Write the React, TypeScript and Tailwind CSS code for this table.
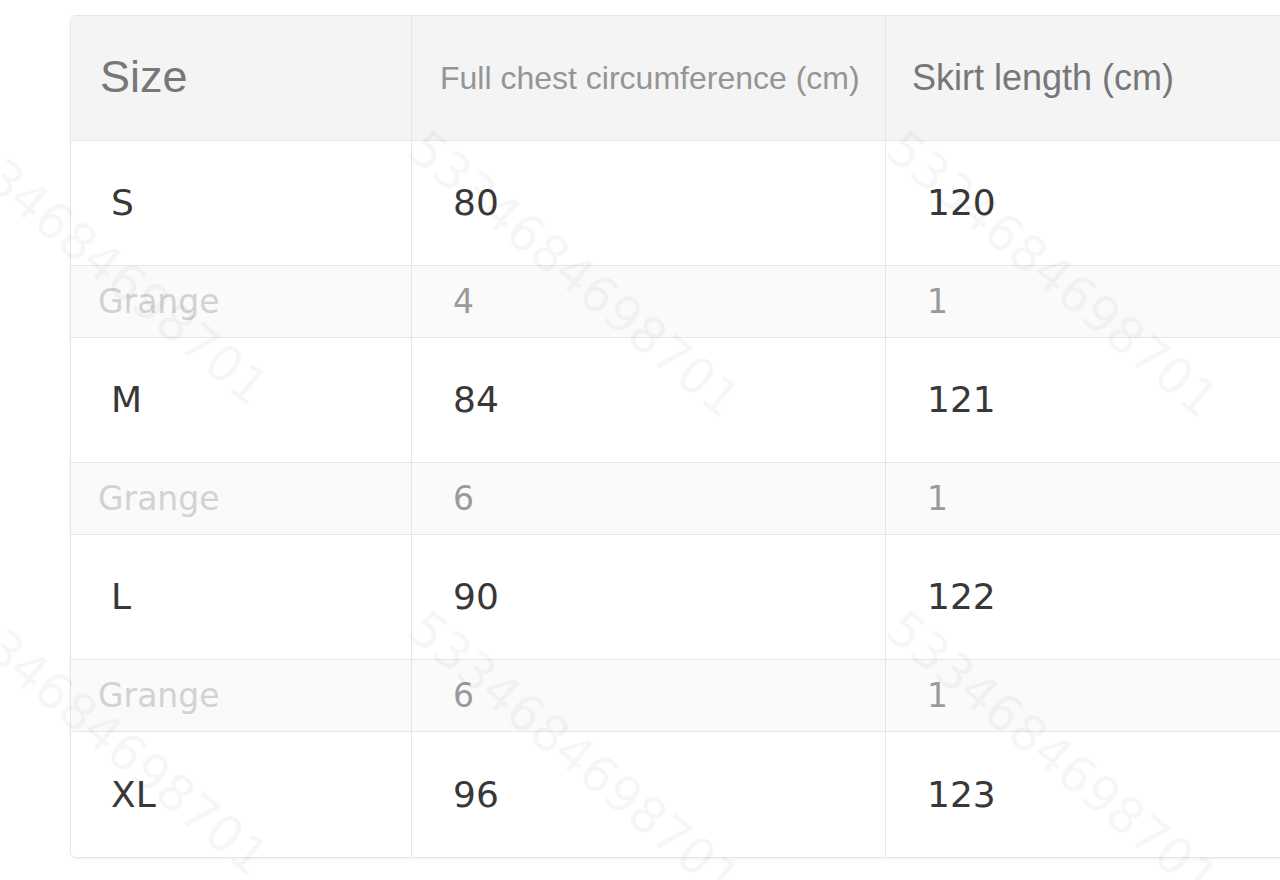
import React from 'react';

interface SizeRow {
  size: string;
  chest: string;
  skirt: string;
  grange?: { chest: string; skirt: string };
}

const rows: SizeRow[] = [
  { size: 'S', chest: '80', skirt: '120', grange: { chest: '4', skirt: '1' } },
  { size: 'M', chest: '84', skirt: '121', grange: { chest: '6', skirt: '1' } },
  { size: 'L', chest: '90', skirt: '122', grange: { chest: '6', skirt: '1' } },
  { size: 'XL', chest: '96', skirt: '123' },
];

// faint diagonal seller-id watermark, drawn over the table
const marks = [
  { left: -40, top: 110 },
  { left: 432, top: 122 },
  { left: 910, top: 122 },
  { left: -40, top: 580 },
  { left: 432, top: 602 },
  { left: 910, top: 602 },
];

export default function App() {
  return (
    <div className="relative w-[1280px] h-[880px] overflow-hidden bg-white">
      <div className="ml-[70px] mt-[15px] w-[1290px] rounded-md border border-[#e6e6e6] shadow-[0_1px_3px_rgba(0,0,0,0.06)] overflow-hidden">
        {/* header */}
        <div className="flex h-[125px] bg-[#f4f4f4] border-b border-[#e6e6e6] font-['Liberation_Sans',Arial,sans-serif]">
          <div className="w-[341px] flex items-center pl-[29px] pb-[2px] text-[45px] text-[#777] border-r border-[#e6e6e6]">
            Size
          </div>
          <div className="w-[474px] flex items-center pl-[28px] text-[32px] text-[#959595] border-r border-[#e6e6e6]">
            Full chest circumference (cm)
          </div>
          <div className="flex-1 flex items-center pl-[26px] text-[36px] text-[#777]">
            Skirt length (cm)
          </div>
        </div>

        {rows.map((r, i) => (
          <React.Fragment key={r.size}>
            <div className={`flex h-[125px] font-['DejaVu_Sans',sans-serif] text-[36px] text-[#383838] ${i < rows.length - 1 ? 'border-b border-[#e6e6e6]' : ''}`}>
              <div className="w-[341px] flex items-center pl-[40px] border-r border-[#e6e6e6]">{r.size}</div>
              <div className="w-[474px] flex items-center pl-[41px] border-r border-[#e6e6e6]">{r.chest}</div>
              <div className="flex-1 flex items-center pl-[41px]">{r.skirt}</div>
            </div>
            {r.grange && (
              <div className="flex h-[72px] bg-[#fafafa] border-b border-[#e6e6e6] font-['DejaVu_Sans',sans-serif] text-[33px]">
                <div className="w-[341px] flex items-center pl-[27px] text-[#d2d2d2] border-r border-[#e6e6e6]">Grange</div>
                <div className="w-[474px] flex items-center pl-[41px] text-[#9a9a9a] border-r border-[#e6e6e6]">{r.grange.chest}</div>
                <div className="flex-1 flex items-center pl-[41px] text-[#9a9a9a]">{r.grange.skirt}</div>
              </div>
            )}
          </React.Fragment>
        ))}
      </div>

      {marks.map((m, i) => (
        <span
          key={i}
          className="absolute origin-top-left rotate-[40deg] whitespace-nowrap font-['DejaVu_Sans',sans-serif] text-[50px] leading-none text-black/[0.035] pointer-events-none select-none"
          style={{ left: m.left, top: m.top }}
        >
          5334684698701
        </span>
      ))}
    </div>
  );
}
